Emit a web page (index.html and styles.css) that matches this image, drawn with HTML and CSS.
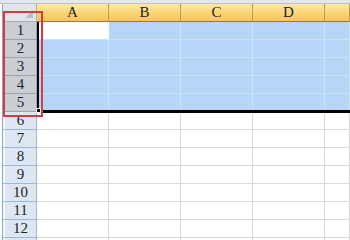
FILE: index.html
```html
<!DOCTYPE html>
<html>
    <head>
        <meta charset="utf-8">
        <title>工作表</title>
        <link rel="stylesheet" href="styles.css">
    </head>
    <body>
        <div class="topbar"></div>
        <div class="sheet">
            <div class="row head">
                <div class="rh corner"><span class="tri"></span></div>
                <div class="ch">A</div>
                <div class="ch">B</div>
                <div class="ch">C</div>
                <div class="ch">D</div>
                <div class="ch last"></div>
            </div>
            <div class="row sel"><div class="rh">1</div><div class="c active"></div><div class="c"></div><div class="c"></div><div class="c"></div><div class="c last"></div></div>
            <div class="row sel"><div class="rh">2</div><div class="c"></div><div class="c"></div><div class="c"></div><div class="c"></div><div class="c last"></div></div>
            <div class="row sel"><div class="rh">3</div><div class="c"></div><div class="c"></div><div class="c"></div><div class="c"></div><div class="c last"></div></div>
            <div class="row sel"><div class="rh">4</div><div class="c"></div><div class="c"></div><div class="c"></div><div class="c"></div><div class="c last"></div></div>
            <div class="row sel"><div class="rh">5</div><div class="c"></div><div class="c"></div><div class="c"></div><div class="c"></div><div class="c last"></div></div>
            <div class="row"><div class="rh">6</div><div class="c"></div><div class="c"></div><div class="c"></div><div class="c"></div><div class="c last"></div></div>
            <div class="row"><div class="rh">7</div><div class="c"></div><div class="c"></div><div class="c"></div><div class="c"></div><div class="c last"></div></div>
            <div class="row"><div class="rh">8</div><div class="c"></div><div class="c"></div><div class="c"></div><div class="c"></div><div class="c last"></div></div>
            <div class="row"><div class="rh">9</div><div class="c"></div><div class="c"></div><div class="c"></div><div class="c"></div><div class="c last"></div></div>
            <div class="row"><div class="rh">10</div><div class="c"></div><div class="c"></div><div class="c"></div><div class="c"></div><div class="c last"></div></div>
            <div class="row"><div class="rh">11</div><div class="c"></div><div class="c"></div><div class="c"></div><div class="c"></div><div class="c last"></div></div>
            <div class="row"><div class="rh">12</div><div class="c"></div><div class="c"></div><div class="c"></div><div class="c"></div><div class="c last"></div></div>
            <div class="row"><div class="rh"></div><div class="c"></div><div class="c"></div><div class="c"></div><div class="c"></div><div class="c last"></div></div>

            <div class="selbox"></div>
            <div class="handle"></div>
            <div class="mark"></div>
        </div>
    </body>
</html>
```

FILE: styles.css
```css
*{
    margin: 0px;
    padding: 0px;
    box-sizing: border-box;
}
body{
    width: 350px;
    height: 240px;
    overflow: hidden;
    background-color: #ffffff;
    font-family: "Liberation Serif", "Noto Sans CJK SC", serif;
}
.topbar{
    height: 4px;
    background-color: #e3e7ee;
    border-bottom: 1px solid #b9c3cf;
}
.sheet{
    position: relative;
}
.row{
    display: flex;
    height: 18px;
}
.rh{
    width: 35px;
    flex: none;
    height: 18px;
    margin-left: 2px;
    padding-left: 2px;
    background-color: #dde7f3;
    border-left: 1px solid #8fa6c2;
    border-right: 1px solid #9eb6ce;
    border-bottom: 1px solid #9eb6ce;
    box-shadow: inset 2px 0 0 #f3f6fa;
    font-size: 15px;
    line-height: 17px;
    text-align: center;
    color: #222222;
}
.sel .rh{
    background-color: #c9ced5;
    border-right-color: #9aa3ad;
    border-bottom-color: #9aa3ad;
    box-shadow: none;
}
.corner{
    position: relative;
    background-color: #e2e5ea;
    border-bottom-color: #a7afb9;
    border-right-color: #a7afb9;
    box-shadow: none;
}
.tri{
    position: absolute;
    right: 3px;
    bottom: 3px;
    width: 0;
    height: 0;
    border-left: 8px solid transparent;
    border-bottom: 8px solid #b7bfc9;
}
.ch{
    width: 72px;
    flex: none;
    height: 18px;
    background: linear-gradient(#fdeaa8, #fbd879 45%, #f6c45c);
    border-right: 1px solid #c79b45;
    border-bottom: 1px solid #a4753a;
    font-size: 15px;
    line-height: 17px;
    text-align: center;
    color: #222222;
}
.c{
    width: 72px;
    flex: none;
    height: 18px;
    border-right: 1px solid #d9d9d9;
    border-bottom: 1px solid #d9d9d9;
}
.last{
    flex: 1;
}
.sel .c{
    background-color: #b6d6f7;
    border-right-color: #cfe3f8;
    border-bottom-color: #cde1f7;
}
.sel .c.active{
    background-color: #ffffff;
    border-right-color: #ffffff;
    border-bottom-color: #cde1f7;
}
.selbox{
    position: absolute;
    left: 37px;
    top: 18px;
    right: 0px;
    height: 91px;
    border-left: 2px solid #000000;
    border-bottom: 3px solid #000000;
}
.handle{
    position: absolute;
    left: 36px;
    top: 104px;
    width: 5px;
    height: 5px;
    background-color: #000000;
    border: 1px solid #ffffff;
}
.mark{
    position: absolute;
    left: 3px;
    top: 7px;
    width: 40px;
    height: 106px;
    border: 2px solid #d83a3e;
}
```
